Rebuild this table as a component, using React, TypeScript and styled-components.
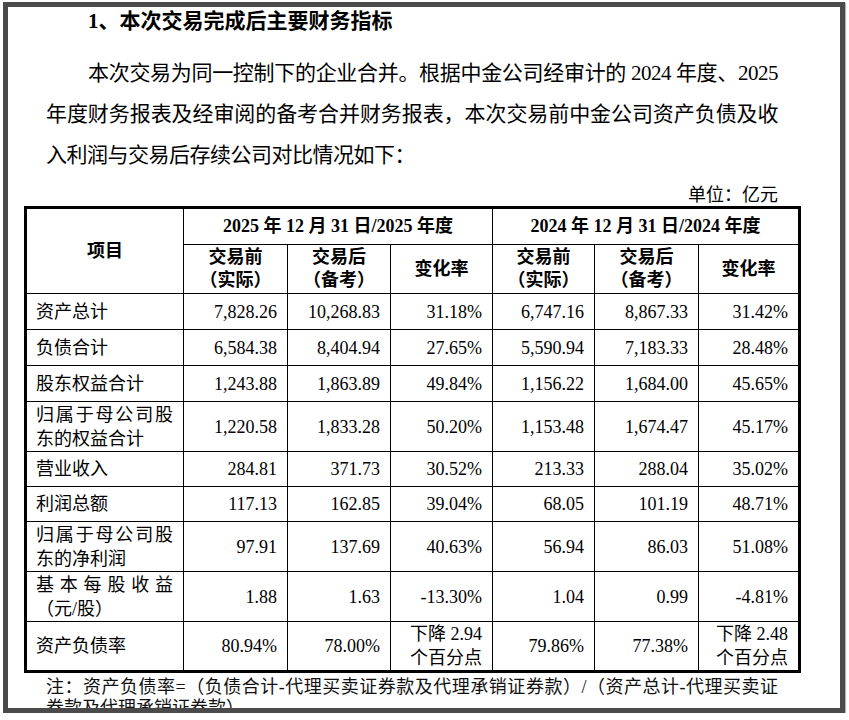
import React from "react";
import styled, { createGlobalStyle } from "styled-components";

const GlobalStyle = createGlobalStyle`
  html, body {
    margin: 0;
    padding: 0;
    background: #ffffff;
  }
  body {
    font-family: "Liberation Serif", "Noto Sans CJK SC", serif;
    color: #000;
    text-spacing-trim: space-all;
  }
`;

const Page = styled.div`
  padding: 2px 0 0 3px;
`;

const Frame = styled.div`
  box-sizing: border-box;
  width: 842px;
  height: 711px;
  border: 5px solid #4a4a4a;
  box-shadow: 1px 1px 1px #b5b5b5;
  background: #fff;
  overflow: hidden;
`;

const Content = styled.div`
  width: 777px;
  margin-left: 16px;
`;

const Heading = styled.h2`
  margin: 0;
  padding: 0 23px 0 64px;
  font-size: 21px;
  line-height: 28px;
  font-weight: 700;
`;

const Para = styled.p`
  margin: 18px 0 0;
  padding: 0 23px 0 22px;
  font-size: 21px;
  line-height: 41px;
  letter-spacing: -0.5px;
  text-indent: 42px;
  text-align: justify;
`;

const Unit = styled.div`
  margin-top: 8px;
  padding-right: 23px;
  font-size: 18px;
  line-height: 22px;
  text-align: right;
`;

const Table = styled.table`
  width: 777px;
  table-layout: fixed;
  border-collapse: separate;
  border-spacing: 0;
  border: 3px solid #000;
  font-size: 18px;
`;

const Row = styled.tr<{ $h: number }>`
  height: ${(p) => p.$h}px;
`;

const Cell = styled.td<{ $noRight?: boolean; $noBottom?: boolean }>`
  box-sizing: border-box;
  padding: 0 10px 0 9px;
  border-right: ${(p) => (p.$noRight ? "none" : "1px solid #000")};
  border-bottom: ${(p) => (p.$noBottom ? "none" : "1px solid #000")};
  vertical-align: middle;
  line-height: 24px;
`;

const HeadCell = styled(Cell)`
  padding: 0;
  text-align: center;
  font-weight: 700;
  line-height: 23px;
`;

const LabelCell = styled(Cell)`
  text-align: justify;
`;

const NumCell = styled(Cell)`
  text-align: right;
`;

const Note = styled.div`
  margin-top: 4px;
  padding: 0 23px 0 22px;
  font-size: 18px;
  line-height: 21px;
  color: #111;
`;

const NoteLine = styled.span<{ $full?: boolean }>`
  display: block;
  white-space: nowrap;
  text-align: justify;
  text-align-last: ${(p) => (p.$full ? "justify" : "auto")};
`;

const widths = [157, 104, 103, 102, 102, 104, 99];

type DataRow = { label: string; v: string[]; h: number };

const rows: DataRow[] = [
  { label: "资产总计", v: ["7,828.26", "10,268.83", "31.18%", "6,747.16", "8,867.33", "31.42%"], h: 36 },
  { label: "负债合计", v: ["6,584.38", "8,404.94", "27.65%", "5,590.94", "7,183.33", "28.48%"], h: 36 },
  { label: "股东权益合计", v: ["1,243.88", "1,863.89", "49.84%", "1,156.22", "1,684.00", "45.65%"], h: 36 },
  { label: "归属于母公司股东的权益合计", v: ["1,220.58", "1,833.28", "50.20%", "1,153.48", "1,674.47", "45.17%"], h: 50 },
  { label: "营业收入", v: ["284.81", "371.73", "30.52%", "213.33", "288.04", "35.02%"], h: 35 },
  { label: "利润总额", v: ["117.13", "162.85", "39.04%", "68.05", "101.19", "48.71%"], h: 35 },
  { label: "归属于母公司股东的净利润", v: ["97.91", "137.69", "40.63%", "56.94", "86.03", "51.08%"], h: 50 },
  { label: "基本每股收益（元/股）", v: ["1.88", "1.63", "-13.30%", "1.04", "0.99", "-4.81%"], h: 50 },
  { label: "资产负债率", v: ["80.94%", "78.00%", "下降 2.94 个百分点", "79.86%", "77.38%", "下降 2.48 个百分点"], h: 45 },
];

const subHeads = [
  ["交易前", "（实际）"],
  ["交易后", "（备考）"],
  ["变化率"],
];

export default function App() {
  return (
    <>
      <GlobalStyle />
      <Page>
        <Frame>
          <Content>
            <Heading>1、本次交易完成后主要财务指标</Heading>
            <Para>
              本次交易为同一控制下的企业合并。根据中金公司经审计的 2024 年度、2025
              年度财务报表及经审阅的备考合并财务报表，本次交易前中金公司资产负债及收入利润与交易后存续公司对比情况如下：
            </Para>
            <Unit>单位：亿元</Unit>
            <Table>
              <colgroup>
                {widths.map((w, i) => (
                  <col key={i} style={{ width: w }} />
                ))}
              </colgroup>
              <thead>
                <Row $h={36}>
                  <HeadCell rowSpan={2}>项目</HeadCell>
                  <HeadCell colSpan={3}>2025 年 12 月 31 日/2025 年度</HeadCell>
                  <HeadCell colSpan={3} $noRight>
                    2024 年 12 月 31 日/2024 年度
                  </HeadCell>
                </Row>
                <Row $h={49}>
                  {[0, 1].flatMap((g) =>
                    subHeads.map((lines, i) => (
                      <HeadCell key={`${g}-${i}`} $noRight={g === 1 && i === 2}>
                        {lines.map((l, j) => (
                          <React.Fragment key={j}>
                            {j > 0 && <br />}
                            {l}
                          </React.Fragment>
                        ))}
                      </HeadCell>
                    ))
                  )}
                </Row>
              </thead>
              <tbody>
                {rows.map((r, ri) => {
                  const last = ri === rows.length - 1;
                  return (
                    <Row key={r.label} $h={r.h}>
                      <LabelCell $noBottom={last}>{r.label}</LabelCell>
                      {r.v.map((val, ci) => (
                        <NumCell key={ci} $noBottom={last} $noRight={ci === r.v.length - 1}>
                          {val}
                        </NumCell>
                      ))}
                    </Row>
                  );
                })}
              </tbody>
            </Table>
            <Note>
              <NoteLine $full>注：资产负债率=（负债合计-代理买卖证券款及代理承销证券款）/（资产总计-代理买卖证</NoteLine>
              <NoteLine>券款及代理承销证券款）</NoteLine>
            </Note>
          </Content>
        </Frame>
      </Page>
    </>
  );
}
